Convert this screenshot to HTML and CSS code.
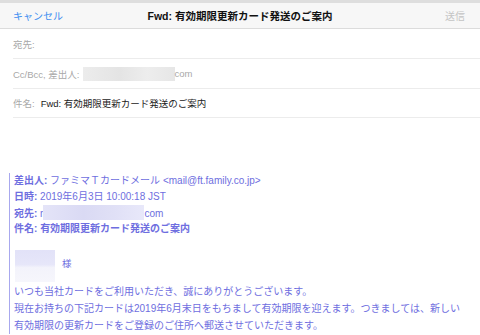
FILE: index.html
```html
<!DOCTYPE html>
<html lang="ja">
<head>
    <meta charset="UTF-8">
    <title>Fwd: 有効期限更新カード発送のご案内</title>
    <link rel="stylesheet" href="styles.css">
</head>
<body>
    <div class="strip"></div>
    <div class="navbar">
        <span class="cancel">キャンセル</span>
        <span class="title">Fwd: 有効期限更新カード発送のご案内</span>
        <span class="send">送信</span>
    </div>
    <div class="fields">
        <div class="field"><span class="label">宛先:</span></div>
        <div class="field"><span class="label">Cc/Bcc, 差出人:</span><span class="blur gray"></span><span class="label">com</span></div>
        <div class="field"><span class="label">件名:</span><span class="subject">Fwd: 有効期限更新カード発送のご案内</span></div>
    </div>
    <div class="body">
        <div class="quote">
            <div class="line"><b>差出人:</b> ファミマＴカードメール &lt;mail@ft.family.co.jp&gt;</div>
            <div class="line"><b>日時:</b> 2019年6月3日 10:00:18 JST</div>
            <div class="line"><b>宛先:</b> r<span class="blur lav"></span>com</div>
            <div class="line"><b>件名:</b> <b>有効期限更新カード発送のご案内</b></div>
            <div class="name"><span class="blur name-box"></span><span>様</span></div>
            <div class="text">
                <div class="line">いつも当社カードをご利用いただき、誠にありがとうございます。</div>
                <div class="line">現在お持ちの下記カードは2019年6月末日をもちまして有効期限を迎えます。つきましては、新しい</div>
                <div class="line">有効期限の更新カードをご登録のご住所へ郵送させていただきます。</div>
            </div>
        </div>
    </div>
</body>
</html>
```

FILE: styles.css
```css
body {
    margin: 0;
    width: 480px;
    height: 335px;
    overflow: hidden;
    background: #fff;
    font-family: "Liberation Sans", "Noto Sans CJK JP", sans-serif;
}

.strip {
    height: 3px;
    background: #dedede;
}

.navbar {
    height: 25px;
    background: #f7f7f7;
    border-bottom: 1px solid #dcdcdc;
    display: grid;
    grid-template-columns: 1fr auto 1fr;
    align-items: center;
    padding: 0 13px;
    font-size: 10px;
}

.cancel {
    color: #3d8ef0;
}

.title {
    font-weight: bold;
    font-size: 10.5px;
    color: #111;
}

.send {
    color: #c4c4c4;
    text-align: right;
    padding-right: 2px;
}

.fields {
    padding-left: 13px;
}

.field {
    height: 29px;
    border-bottom: 1px solid #ececec;
    display: flex;
    align-items: center;
    font-size: 9.5px;
}

.field:last-child {
    height: 28px;
}

.label {
    color: #a8a8a8;
}

.subject {
    color: #222;
    margin-left: 6px;
}

.blur {
    display: inline-block;
}

.blur.gray {
    width: 92px;
    height: 14px;
    margin-left: 3px;
    background: linear-gradient(90deg, #ececec, #e4e4e4 40%, #ededed 70%, #e6e6e6);
}

.body {
    padding-top: 55px;
}

.quote {
    margin-left: 9px;
    border-left: 1.5px solid #a8a8ee;
    padding-left: 4px;
    color: #6e6ee0;
    font-size: 10px;
}

.line {
    height: 16px;
    line-height: 16px;
    white-space: nowrap;
}

.blur.lav {
    width: 101px;
    height: 15px;
    vertical-align: -3px;
    background: linear-gradient(90deg, #e4e4f8, #dadaf4 40%, #e0e0f6 70%, #e8e8fa);
}

.name {
    display: flex;
    align-items: flex-start;
    gap: 7px;
    height: 33px;
    margin-top: 13px;
}

.name span:last-child {
    margin-top: 6px;
    font-size: 9.5px;
}

.blur.name-box {
    width: 40px;
    height: 32px;
    margin-left: 1px;
    background: linear-gradient(180deg, #e2e2f8 0, #e6e6f9 45%, #f3f3fb 55%, #f6f6fc 100%);
}

.text .line {
    height: 17px;
    line-height: 17px;
}
```
